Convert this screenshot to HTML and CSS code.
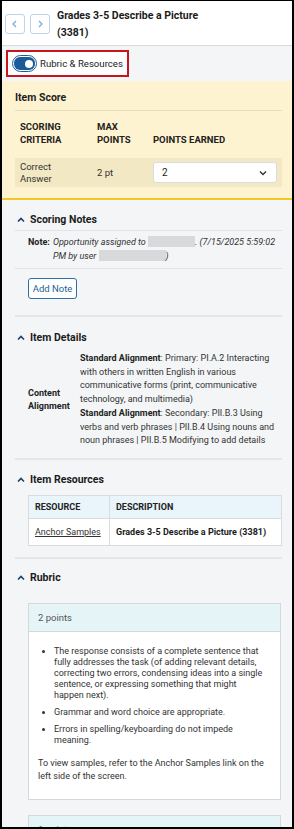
FILE: index.html
```html
<!DOCTYPE html>
<html lang="en">
<head>
<meta charset="utf-8">
<title>Rubric</title>
<link rel="stylesheet" href="styles.css">
</head>
<body>
<div class="frame">
  <header class="header">
    <button class="nav-btn" aria-label="Previous">
      <svg width="10" height="10" viewBox="0 0 10 10"><path d="M6 2 L3 5 L6 8" fill="none" stroke="#7aaedc" stroke-width="1.3"/></svg>
    </button>
    <button class="nav-btn" aria-label="Next">
      <svg width="10" height="10" viewBox="0 0 10 10"><path d="M4 2 L7 5 L4 8" fill="none" stroke="#7aaedc" stroke-width="1.3"/></svg>
    </button>
    <h1 class="title">Grades 3-5 Describe a Picture (3381)</h1>
  </header>

  <div class="toggle-bar">
    <label class="toggle-box">
      <span class="switch"><span class="track"><span class="knob"></span></span></span>
      <span class="toggle-label">Rubric &amp; Resources</span>
    </label>
  </div>

  <section class="score">
    <h2 class="score-title">Item Score</h2>
    <div class="score-head">
      <div class="c1">SCORING CRITERIA</div>
      <div class="c2">MAX POINTS</div>
      <div class="c3">POINTS EARNED</div>
    </div>
    <div class="score-row">
      <div class="c1">Correct Answer</div>
      <div class="c2">2 pt</div>
      <div class="c3">
        <div class="select"><span>2</span>
          <svg width="10" height="10" viewBox="0 0 10 10"><path d="M2 3.5 L5 6.5 L8 3.5" fill="none" stroke="#333" stroke-width="1.4"/></svg>
        </div>
      </div>
    </div>
  </section>

  <main class="main">
    <section class="panel notes">
      <h2 class="panel-title ruled"><svg class="chev" width="8" height="8" viewBox="0 0 8 8"><path d="M1 5.5 L4 2.5 L7 5.5" fill="none" stroke="#1b3f6e" stroke-width="1.6"/></svg>Scoring Notes</h2>
      <div class="note">
        <span class="note-label">Note:</span>
        <span class="note-text">Opportunity assigned to <span class="redact r1"></span>. (7/15/2025 5:59:02 PM by user <span class="redact r2"></span>)</span>
      </div>
      <div class="note-actions">
        <button class="add-note">Add Note</button>
      </div>
    </section>

    <section class="panel details-panel">
      <h2 class="panel-title"><svg class="chev" width="8" height="8" viewBox="0 0 8 8"><path d="M1 5.5 L4 2.5 L7 5.5" fill="none" stroke="#1b3f6e" stroke-width="1.6"/></svg>Item Details</h2>
      <div class="details">
        <div class="details-label">Content Alignment</div>
        <div class="details-text">
          <b>Standard Alignment</b>: Primary: PI.A.2 Interacting with others in written English in various communicative forms (print, communicative technology, and multimedia)<br>
          <b>Standard Alignment</b>: Secondary: PII.B.3 Using verbs and verb phrases | PII.B.4 Using nouns and noun phrases | PII.B.5 Modifying to add details
        </div>
      </div>
    </section>

    <section class="panel res-panel">
      <h2 class="panel-title"><svg class="chev" width="8" height="8" viewBox="0 0 8 8"><path d="M1 5.5 L4 2.5 L7 5.5" fill="none" stroke="#1b3f6e" stroke-width="1.6"/></svg>Item Resources</h2>
      <table class="res-table">
        <thead>
          <tr><th class="col-res">RESOURCE</th><th>DESCRIPTION</th></tr>
        </thead>
        <tbody>
          <tr><td class="col-res"><a href="#">Anchor Samples</a></td><td class="desc">Grades 3-5 Describe a Picture (3381)</td></tr>
        </tbody>
      </table>
    </section>

    <section class="panel rubric-panel">
      <h2 class="panel-title"><svg class="chev" width="8" height="8" viewBox="0 0 8 8"><path d="M1 5.5 L4 2.5 L7 5.5" fill="none" stroke="#1b3f6e" stroke-width="1.6"/></svg>Rubric</h2>
      <div class="rubric-card">
        <div class="rubric-head">2 points</div>
        <div class="rubric-body">
          <ul>
            <li>The response consists of a complete sentence that fully addresses the task (of adding relevant details, correcting two errors, condensing ideas into a single sentence, or expressing something that might happen next).</li>
            <li>Grammar and word choice are appropriate.</li>
            <li>Errors in spelling/keyboarding do not impede meaning.</li>
          </ul>
          <p>To view samples, refer to the Anchor Samples link on the left side of the screen.</p>
        </div>
      </div>
      <div class="rubric-card">
        <div class="rubric-head">1 point</div>
        <div class="rubric-body">
          <ul>
            <li>The response consists of a sentence that partially addresses the task.</li>
          </ul>
        </div>
      </div>
    </section>
  </main>
</div>
</body>
</html>
```

FILE: styles.css
```css
* { box-sizing: border-box; }
html, body { margin: 0; padding: 0; }
body {
  font-family: Roboto, "Liberation Sans", sans-serif;
  color: #1f1f1f;
  background: #000;
}
.frame {
  width: 294px;
  height: 829px;
  overflow: hidden;
  border: 2px solid #000;
  border-top-width: 1px;
  background: #f4f5f7;
}

/* header */
.header {
  display: flex;
  align-items: center;
  height: 45px;
  padding: 2px 0 0 3px;
  background: #fff;
  border-bottom: 1px solid #d5dae0;
}
.nav-btn {
  width: 20px;
  height: 20px;
  margin: 0 5px 0 0;
  padding: 0;
  border: 1px solid #bcd5ec;
  border-radius: 3px;
  background: #fff;
  display: flex;
  align-items: center;
  justify-content: center;
}
.nav-btn + .nav-btn { margin-right: 7px; }
.title {
  margin: 0;
  width: 150px;
  font-size: 10.5px;
  line-height: 17px;
  font-weight: 700;
  color: #1b1b1b;
}

/* toggle */
.toggle-bar {
  height: 35px;
  padding: 4px 0 0 4px;
}
.toggle-box {
  display: flex;
  align-items: center;
  width: 123px;
  height: 27px;
  border: 2px solid #c4161c;
  background: #fff;
  padding-left: 4px;
}
.switch {
  display: flex;
  width: 25px;
  height: 17px;
  padding: 1px;
  border: 1.5px solid #1b5b97;
  border-radius: 9px;
  background: #fff;
  margin-right: 3px;
}
.track {
  flex: 1;
  display: flex;
  align-items: center;
  justify-content: flex-end;
  padding-right: 2px;
  border-radius: 6px;
  background: #1b5b97;
}
.knob {
  width: 8px;
  height: 8px;
  border-radius: 50%;
  background: #fff;
}
.toggle-label {
  font-size: 9.6px;
  white-space: nowrap;
  color: #222;
}

/* item score */
.score {
  height: 119px;
  padding: 10px 10px 0 13px;
  background: #fef3d0;
  border-bottom: 2px solid #f6c623;
}
.score-title {
  margin: 0;
  height: 20px;
  font-size: 10.5px;
  line-height: 14px;
  font-weight: 700;
  border-bottom: 1px solid #e8deb8;
}
.score-head, .score-row {
  display: flex;
  align-items: center;
}
.score-head {
  align-items: flex-end;
  height: 47px;
  padding: 8px 0 12px;
  font-size: 9.5px;
  font-weight: 700;
  line-height: 13px;
  color: #222;
}
.c1 { width: 82px; padding: 0 20px 0 5px; }
.c2 { width: 56px; }
.c3 { flex: 1; padding-right: 5px; }
.score-row {
  height: 29px;
  background: #f3e8c4;
  font-size: 9.5px;
  line-height: 12px;
  color: #333;
}
.select {
  display: flex;
  align-items: center;
  justify-content: space-between;
  height: 21px;
  background: #fff;
  border: 1px solid #dcdcdc;
  border-radius: 3px;
  padding: 0 8px 0 8px;
  font-size: 10px;
  color: #222;
}

/* panels */
.main {
  padding: 0 10px 0 13px;
}
.panel {
  border-bottom: 2px solid #e4e6e9;
}
.panel-title {
  display: flex;
  align-items: center;
  margin: 0;
  font-size: 10.5px;
  line-height: 14px;
  font-weight: 700;
  color: #1b1b1b;
}
.chev { margin: 0 5px 0 2px; }
.ruled {
  height: 31px;
  padding-top: 9px;
  border-bottom: 1px solid #dfe2e6;
}
.details-panel .panel-title { padding: 14px 0 7px; }
.res-panel .panel-title { padding: 13px 0 8px; }
.rubric-panel .panel-title { padding: 12px 0 18px; }
.rubric-panel { border-bottom: none; }

/* notes */
.note {
  display: flex;
  padding: 4px 0 5px 13px;
  font-size: 9px;
  line-height: 14px;
  color: #333;
  border-bottom: 1px solid #dfe2e6;
}
.note-label { font-weight: 700; margin-right: 3px; white-space: nowrap; color: #222; }
.note-text { font-style: italic; }
.redact {
  display: inline-block;
  vertical-align: -2px;
  height: 11px;
  background: #d8d9db;
}
.r1 { width: 47px; }
.r2 { width: 67px; }
.note-actions { padding: 9px 0 16px 13px; }
.add-note {
  display: block;
  height: 21px;
  width: 49px;
  padding: 0;
  border: 1px solid #2e6fa8;
  border-radius: 3px;
  background: #fff;
  color: #255f97;
  font-family: inherit;
  font-size: 9.5px;
}

/* details */
.details {
  display: flex;
  align-items: center;
  padding: 0 0 10px 13px;
}
.details-label {
  width: 52px;
  flex: none;
  font-size: 9px;
  font-weight: 700;
  line-height: 13px;
  color: #222;
}
.details-text {
  flex: 1;
  font-size: 9px;
  line-height: 13.7px;
  color: #333;
}
.details-text b { color: #222; }

/* resources */
.res-table {
  margin: 0 0 11px 13px;
  width: 254px;
  border-collapse: collapse;
  font-size: 9px;
}
.res-table th, .res-table td {
  border: 1px solid #d8dbdf;
  text-align: left;
  padding: 0 6px;
}
.res-table th {
  height: 23px;
  background: #e9f4fb;
  font-weight: 700;
  color: #222;
}
.res-table td {
  height: 27px;
  background: #fff;
}
.res-table .col-res { width: 81px; }
.res-table a { color: #333; }
.res-table .desc { font-weight: 700; color: #1b1b1b; }

/* rubric */
.rubric-card {
  margin: 0 1px 15px 13px;
  border: 1px solid #d6d9dc;
  background: #fff;
}
.rubric-head {
  height: 28px;
  padding: 0 9px;
  display: flex;
  align-items: center;
  background: #e5f5f7;
  border-bottom: 1px solid #d6d9dc;
  font-size: 9.5px;
  color: #555;
}
.rubric-body {
  padding: 14px 12px 16px 9px;
  font-size: 9px;
  line-height: 11px;
  color: #333;
}
.rubric-body ul {
  margin: 0;
  padding-left: 16px;
}
.rubric-body li + li { margin-top: 6px; }
.rubric-body p {
  margin: 11px 0 0;
  line-height: 13px;
}
```
